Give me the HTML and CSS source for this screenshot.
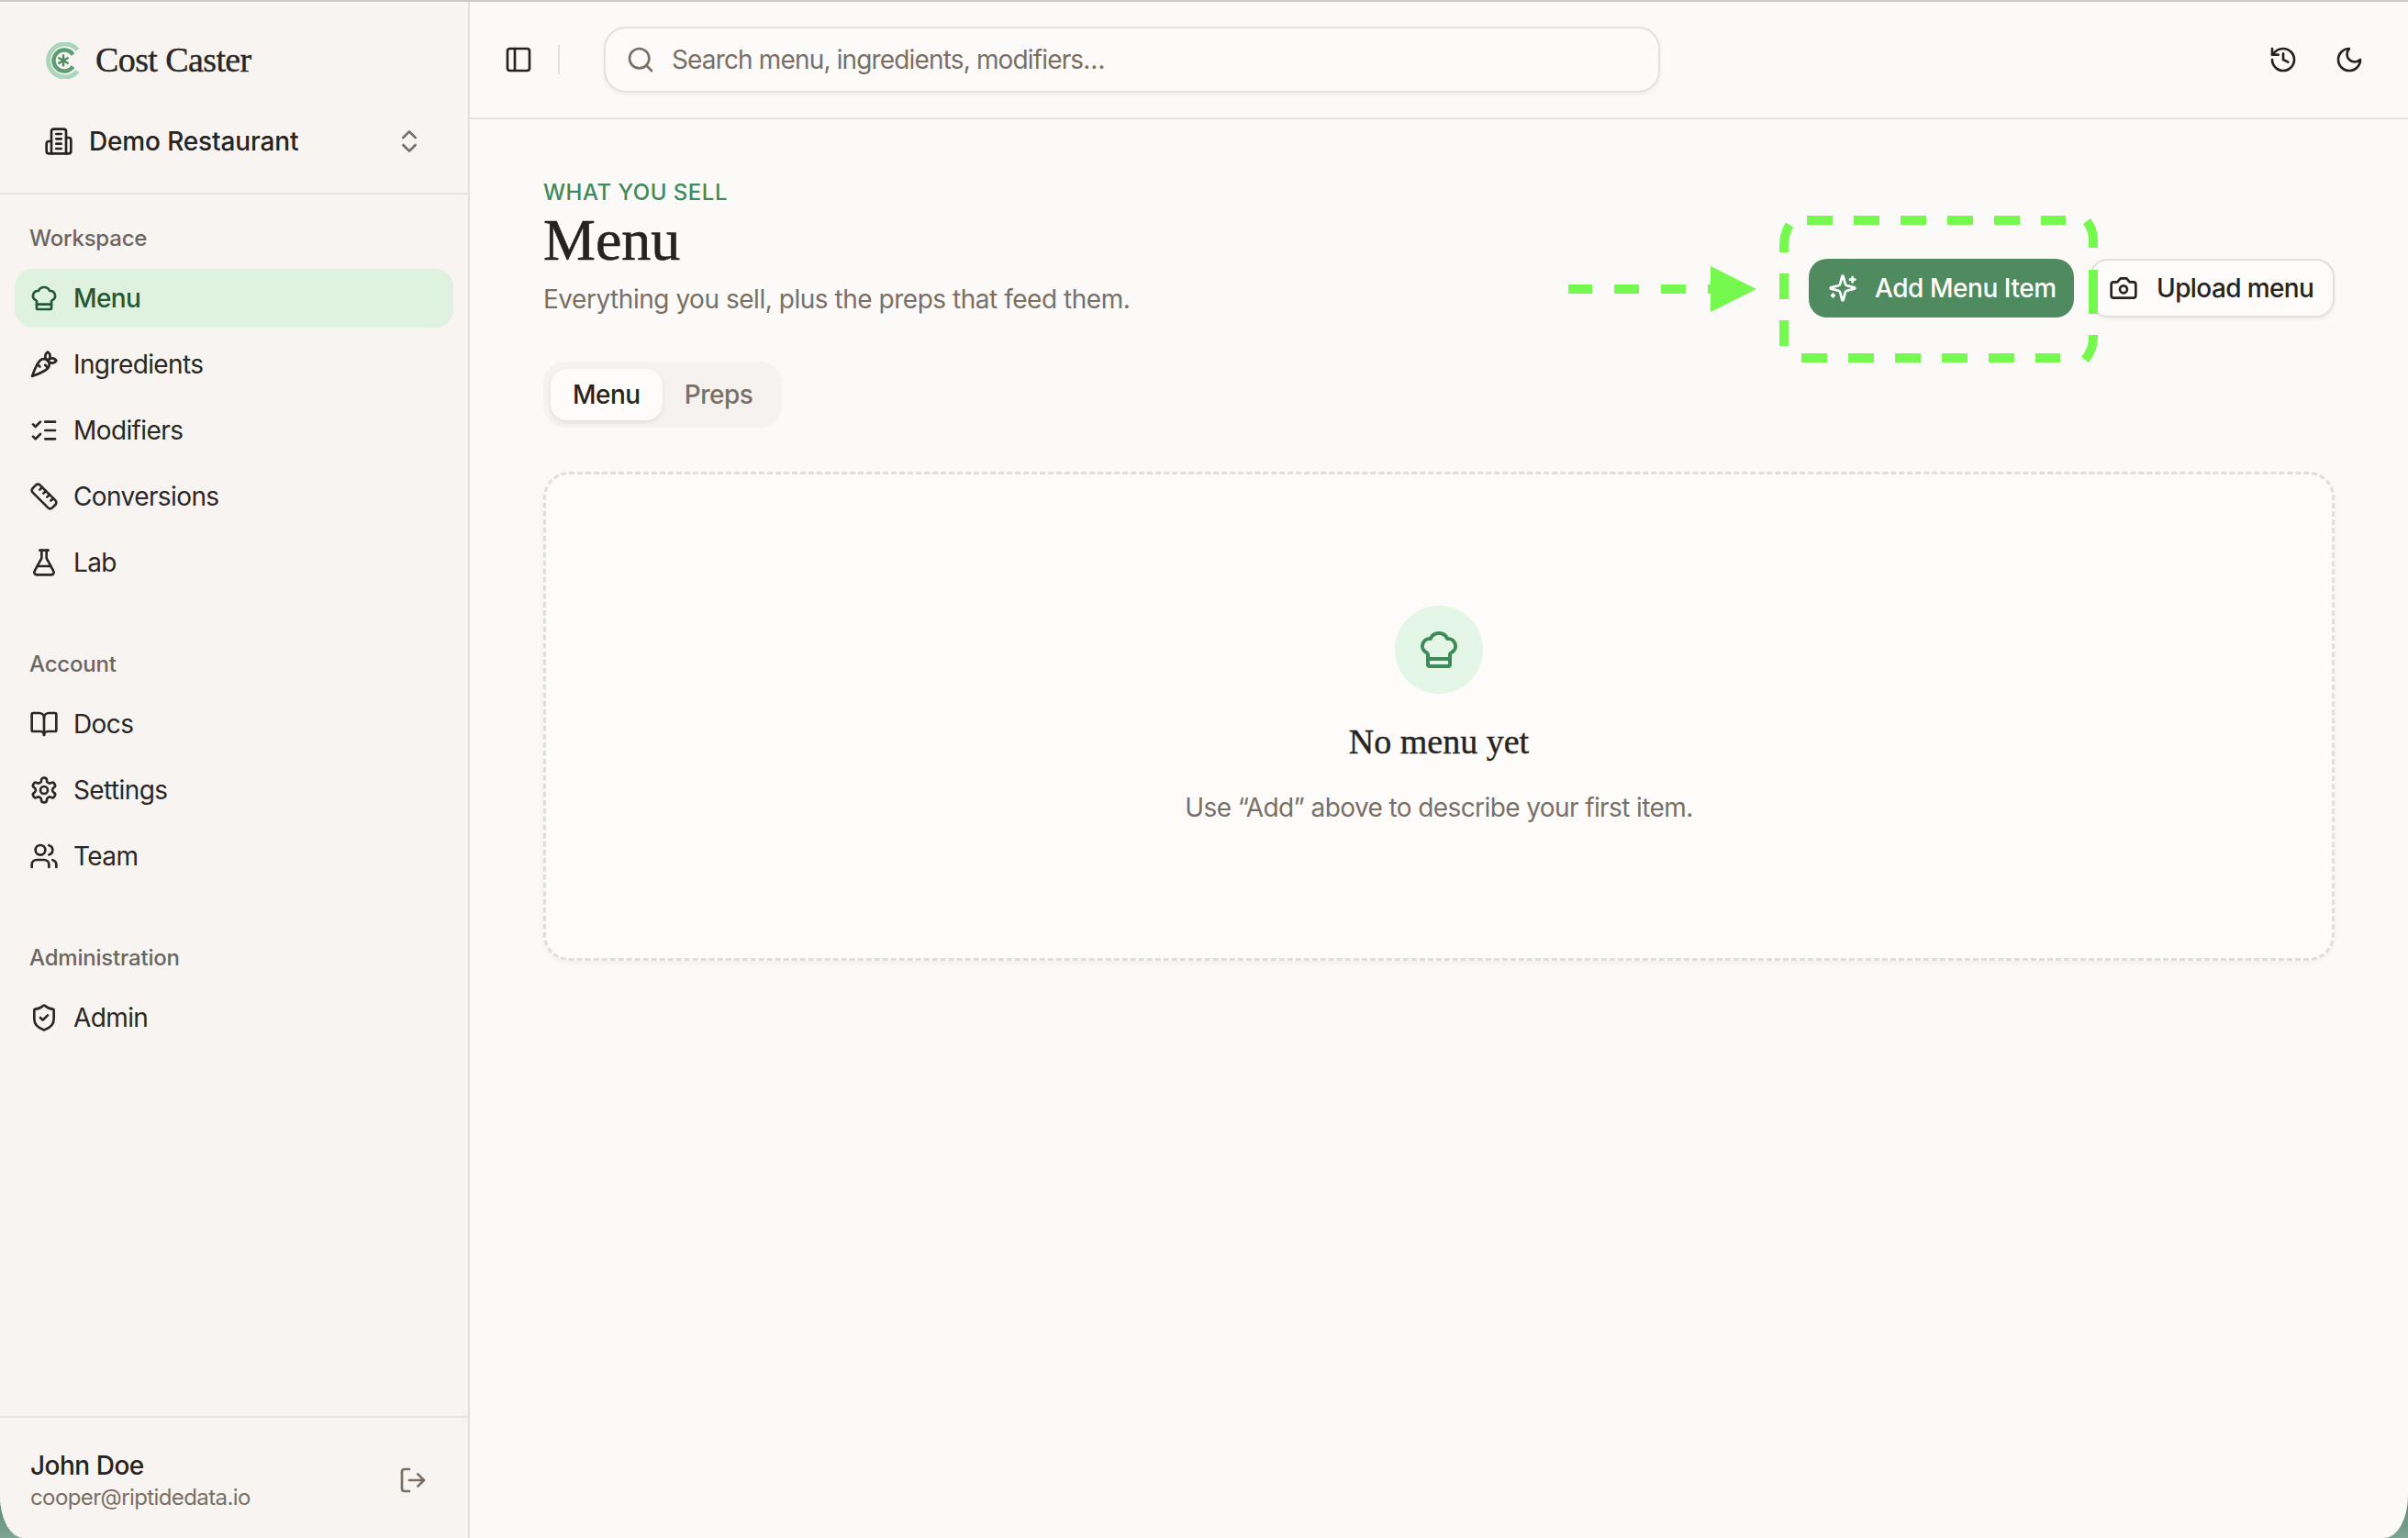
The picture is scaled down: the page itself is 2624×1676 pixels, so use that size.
FILE: index.html
```html
<!DOCTYPE html>
<html lang="en">
<head>
<meta charset="utf-8">
<title>Cost Caster</title>
<link rel="stylesheet" href="styles.css">
</head>
<body>
<div class="app">
  <aside class="sidebar">
    <div class="side-head">
      <div class="brand">
        <svg class="logo" viewBox="0 0 40 40" fill="none">
          <path d="M35.5 8.5A18 18 0 1 0 35.5 31.5" stroke="#abd6bb" stroke-width="5"/>
          <path d="M30.5 13.5A11.5 11.5 0 1 0 30.5 26.5" stroke="#5d9d74" stroke-width="4.5"/>
          <path d="M20 13.5v13M14.4 16.7l11.2 6.6M14.4 23.3l11.2-6.6" stroke="#4f8b5e" stroke-width="2.4"/>
        </svg>
        <span class="brand-name">Cost Caster</span>
      </div>
      <div class="org">
        <svg class="ico" viewBox="0 0 24 24"><path d="M6 22V4a2 2 0 0 1 2-2h8a2 2 0 0 1 2 2v18Z"/><path d="M6 12H4a2 2 0 0 0-2 2v6a2 2 0 0 0 2 2h2"/><path d="M18 9h2a2 2 0 0 1 2 2v9a2 2 0 0 1-2 2h-2"/><path d="M10 6h4"/><path d="M10 10h4"/><path d="M10 14h4"/><path d="M10 18h4"/></svg>
        <span class="org-name">Demo Restaurant</span>
        <svg class="ico ico-muted" viewBox="0 0 24 24"><path d="m7 15 5 5 5-5"/><path d="m7 9 5-5 5 5"/></svg>
      </div>
    </div>
    <nav class="nav">
      <div class="nav-group">
        <div class="nav-label">Workspace</div>
        <a class="nav-item is-active"><svg class="ico" viewBox="0 0 24 24"><path d="M17 21a1 1 0 0 0 1-1v-5.35c0-.457.316-.844.727-1.041a4 4 0 0 0-2.134-7.589 5 5 0 0 0-9.186 0 4 4 0 0 0-2.134 7.588c.411.198.727.585.727 1.041V20a1 1 0 0 0 1 1Z"/><path d="M6 17h12"/></svg>Menu</a>
        <a class="nav-item"><svg class="ico" viewBox="0 0 24 24"><path d="M2.27 21.7s9.87-3.5 12.73-6.36a4.5 4.5 0 0 0-6.36-6.37C5.77 11.84 2.27 21.7 2.27 21.7zM8.64 14l-2.05-2.04M15.34 15l-2.46-2.46"/><path d="M22 9s-1.33-2-3.5-2C16.86 7 15 9 15 9s1.33 2 3.5 2S22 9 22 9z"/><path d="M15 2s-2 1.33-2 3.5S15 9 15 9s2-1.84 2-3.5C17 3.33 15 2 15 2z"/></svg>Ingredients</a>
        <a class="nav-item"><svg class="ico" viewBox="0 0 24 24"><path d="M13 5h8"/><path d="M13 12h8"/><path d="M13 19h8"/><path d="m3 17 2 2 4-4"/><path d="m3 7 2 2 4-4"/></svg>Modifiers</a>
        <a class="nav-item"><svg class="ico" viewBox="0 0 24 24"><path d="M21.3 15.3a2.4 2.4 0 0 1 0 3.4l-2.6 2.6a2.4 2.4 0 0 1-3.4 0L2.7 8.7a2.41 2.41 0 0 1 0-3.4l2.6-2.6a2.41 2.41 0 0 1 3.4 0Z"/><path d="m14.5 12.5 2-2"/><path d="m11.5 9.5 2-2"/><path d="m8.5 6.5 2-2"/><path d="m17.5 15.5 2-2"/></svg>Conversions</a>
        <a class="nav-item"><svg class="ico" viewBox="0 0 24 24"><path d="M14 2v6a2 2 0 0 0 .245.96l5.51 10.08A2 2 0 0 1 18 22H6a2 2 0 0 1-1.755-2.96l5.51-10.08A2 2 0 0 0 10 8V2"/><path d="M6.453 15h11.094"/><path d="M8.5 2h7"/></svg>Lab</a>
      </div>
      <div class="nav-group">
        <div class="nav-label">Account</div>
        <a class="nav-item"><svg class="ico" viewBox="0 0 24 24"><path d="M12 7v14"/><path d="M3 18a1 1 0 0 1-1-1V4a1 1 0 0 1 1-1h5a4 4 0 0 1 4 4 4 4 0 0 1 4-4h5a1 1 0 0 1 1 1v13a1 1 0 0 1-1 1h-6a3 3 0 0 0-3 3 3 3 0 0 0-3-3z"/></svg>Docs</a>
        <a class="nav-item"><svg class="ico" viewBox="0 0 24 24"><path d="M12.22 2h-.44a2 2 0 0 0-2 2v.18a2 2 0 0 1-1 1.73l-.43.25a2 2 0 0 1-2 0l-.15-.08a2 2 0 0 0-2.73.73l-.22.38a2 2 0 0 0 .73 2.73l.15.1a2 2 0 0 1 1 1.72v.51a2 2 0 0 1-1 1.74l-.15.09a2 2 0 0 0-.73 2.73l.22.38a2 2 0 0 0 2.73.73l.15-.08a2 2 0 0 1 2 0l.43.25a2 2 0 0 1 1 1.73V20a2 2 0 0 0 2 2h.44a2 2 0 0 0 2-2v-.18a2 2 0 0 1 1-1.73l.43-.25a2 2 0 0 1 2 0l.15.08a2 2 0 0 0 2.73-.73l.22-.39a2 2 0 0 0-.73-2.73l-.15-.08a2 2 0 0 1-1-1.74v-.5a2 2 0 0 1 1-1.74l.15-.09a2 2 0 0 0 .73-2.73l-.22-.38a2 2 0 0 0-2.73-.73l-.15.08a2 2 0 0 1-2 0l-.43-.25a2 2 0 0 1-1-1.73V4a2 2 0 0 0-2-2z"/><circle cx="12" cy="12" r="3"/></svg>Settings</a>
        <a class="nav-item"><svg class="ico" viewBox="0 0 24 24"><path d="M16 21v-2a4 4 0 0 0-4-4H6a4 4 0 0 0-4 4v2"/><circle cx="9" cy="7" r="4"/><path d="M22 21v-2a4 4 0 0 0-3-3.87"/><path d="M16 3.13a4 4 0 0 1 0 7.75"/></svg>Team</a>
      </div>
      <div class="nav-group">
        <div class="nav-label">Administration</div>
        <a class="nav-item"><svg class="ico" viewBox="0 0 24 24"><path d="M20 13c0 5-3.5 7.5-7.66 8.95a1 1 0 0 1-.67-.01C7.5 20.5 4 18 4 13V6a1 1 0 0 1 1-1c2 0 4.5-1.2 6.24-2.72a1.17 1.17 0 0 1 1.52 0C14.51 3.81 17 5 19 5a1 1 0 0 1 1 1z"/><path d="m9 12 2 2 4-4"/></svg>Admin</a>
      </div>
    </nav>
    <div class="user">
      <div class="user-text">
        <div class="user-name">John Doe</div>
        <div class="user-mail">cooper@riptidedata.io</div>
      </div>
      <svg class="ico ico-muted" viewBox="0 0 24 24"><path d="m16 17 5-5-5-5"/><path d="M21 12H9"/><path d="M9 21H5a2 2 0 0 1-2-2V5a2 2 0 0 1 2-2h4"/></svg>
    </div>
  </aside>
  <div class="content">
    <header class="topbar">
      <svg class="ico" viewBox="0 0 24 24"><rect width="18" height="18" x="3" y="3" rx="2"/><path d="M9 3v18"/></svg>
      <span class="top-sep"></span>
      <div class="search">
        <svg class="ico ico-muted" viewBox="0 0 24 24"><path d="m21 21-4.34-4.34"/><circle cx="11" cy="11" r="8"/></svg>
        <span class="search-text">Search menu, ingredients, modifiers…</span>
      </div>
      <div class="top-actions">
        <svg class="ico" viewBox="0 0 24 24"><path d="M3 12a9 9 0 1 0 9-9 9.75 9.75 0 0 0-6.74 2.74L3 8"/><path d="M3 3v5h5"/><path d="M12 7v5l4 2"/></svg>
        <svg class="ico" viewBox="0 0 24 24"><path d="M12 3a6 6 0 0 0 9 9 9 9 0 1 1-9-9Z"/></svg>
      </div>
    </header>
    <main class="main">
      <div class="page-head">
        <div class="titles">
          <div class="eyebrow">WHAT YOU SELL</div>
          <h1 class="title">Menu</h1>
          <p class="subtitle">Everything you sell, plus the preps that feed them.</p>
        </div>
        <div class="actions">
          <button class="btn btn-primary"><svg class="ico" viewBox="0 0 24 24"><path d="M9.937 15.5A2 2 0 0 0 8.5 14.063l-6.135-1.582a.5.5 0 0 1 0-.962L8.5 9.936A2 2 0 0 0 9.937 8.5l1.582-6.135a.5.5 0 0 1 .963 0L14.063 8.5A2 2 0 0 0 15.5 9.937l6.135 1.581a.5.5 0 0 1 0 .964L15.5 14.063a2 2 0 0 0-1.437 1.437l-1.582 6.135a.5.5 0 0 1-.963 0z"/><path d="M20 3v4"/><path d="M22 5h-4"/><path d="M4 17v2"/><path d="M5 18H3"/></svg>Add Menu Item</button>
          <button class="btn btn-ghost"><svg class="ico" viewBox="0 0 24 24"><path d="M14.5 4h-5L7 7H4a2 2 0 0 0-2 2v9a2 2 0 0 0 2 2h16a2 2 0 0 0 2-2V9a2 2 0 0 0-2-2h-3l-2.5-3z"/><circle cx="12" cy="13" r="3"/></svg>Upload menu</button>
        </div>
      </div>
      <div class="tabs">
        <span class="tab is-on">Menu</span>
        <span class="tab">Preps</span>
      </div>
      <section class="empty">
        <div class="empty-badge"><svg class="ico" viewBox="0 0 24 24"><path d="M17 21a1 1 0 0 0 1-1v-5.35c0-.457.316-.844.727-1.041a4 4 0 0 0-2.134-7.589 5 5 0 0 0-9.186 0 4 4 0 0 0-2.134 7.588c.411.198.727.585.727 1.041V20a1 1 0 0 0 1 1Z"/><path d="M6 17h12"/></svg></div>
        <h2 class="empty-title">No menu yet</h2>
        <p class="empty-text">Use “Add” above to describe your first item.</p>
      </section>
    </main>
  </div>
  <svg class="annotation" viewBox="1700 230 600 170" fill="none">
    <path class="a-line" d="M1709 315H1735M1759 315H1786M1810 315H1837M1861 315H1866"/>
    <path class="a-fill" d="M1864 290L1914 315L1864 340Z"/>
    <path class="a-line" d="M1969 240H1997M2020 240H2048M2071 240H2099M2122 240H2150M2173 240H2201M2224 240H2251"/>
    <path class="a-line" d="M1963 390H1991M2014 390H2042M2065 390H2093M2116 390H2144M2167 390H2195M2218 390H2245"/>
    <path class="a-line" d="M1944 275V267Q1944 255 1950 245M1944 298V326M1944 349V377"/>
    <path class="a-line" d="M2281 270V262Q2281 250 2274 241M2281 294V342M2281 365V368Q2281 381 2272 392"/>
  </svg>
</div>
</body>
</html>
```
FILE: styles.css
```css
* { box-sizing: border-box; }
html, body { margin: 0; height: 100%; }
body {
  background: linear-gradient(180deg, #7fa090 0%, #4f7f6e 97%, #7fa595 100%);
  font-family: Inter, "Liberation Sans", sans-serif;
  color: #262320;
  overflow: hidden;
}
.app {
  position: relative;
  display: flex;
  width: 2624px;
  height: 1676px;
  border-top: 2px solid #cbcbc7;
  border-radius: 0 0 26px 26px / 0 0 46px 46px;
  overflow: hidden;
  background: #fbfaf8;
}
.ico {
  width: 32px;
  height: 32px;
  flex: none;
  fill: none;
  stroke: currentColor;
  stroke-width: 2;
  stroke-linecap: round;
  stroke-linejoin: round;
}
.ico-muted { color: #7a6f65; }

/* sidebar */
.sidebar {
  width: 512px;
  flex: none;
  display: flex;
  flex-direction: column;
  background: #f7f4f1;
  border-right: 2px solid #e3e0dc;
}
.side-head {
  height: 210px;
  padding: 0 48px;
  border-bottom: 2px solid #e8e5e1;
  flex: none;
}
.brand {
  display: flex;
  align-items: center;
  gap: 15px;
  height: 128px;
  padding-left: 1px;
}
.logo { width: 40px; height: 40px; flex: none; }
.brand-name {
  margin-bottom: 2px;
  font-family: "Liberation Serif", serif;
  font-size: 38px;
  letter-spacing: -0.6px;
  -webkit-text-stroke: 0.4px #2a2724;
  color: #2a2724;
}
.org {
  display: flex;
  align-items: center;
  height: 48px;
  gap: 17px;
}
.org-name {
  flex: 1;
  font-size: 28px;
  font-weight: 500;
  letter-spacing: -0.15px;
}
.nav {
  flex: 1;
  padding: 0 16px;
}
.nav-group { margin-bottom: 62px; }
.nav-group:first-child { padding-top: 31px; }
.nav-label {
  height: 34px;
  line-height: 34px;
  padding-left: 16px;
  font-size: 24px;
  font-weight: 500;
  letter-spacing: -0.2px;
  color: #6c6661;
  margin-bottom: 16px;
}
.nav-item {
  display: flex;
  align-items: center;
  gap: 16px;
  height: 64px;
  margin-bottom: 8px;
  padding-left: 16px;
  border-radius: 20px;
  font-size: 28px;
  letter-spacing: -0.6px;
  color: #2a2724;
}
.nav-item.is-active {
  background: #def2df;
  color: #23583a;
  font-weight: 500;
}
.user {
  height: 133px;
  flex: none;
  display: flex;
  align-items: center;
  justify-content: space-between;
  padding: 0 44px 0 33px;
  border-top: 2px solid #e8e5e1;
}
.user .ico { margin-top: 4px; }
.user-text { margin-top: 6px; }
.user-name {
  font-size: 28px;
  font-weight: 500;
  letter-spacing: -0.5px;
  line-height: 36px;
}
.user-mail {
  font-size: 24px;
  line-height: 34px;
  letter-spacing: -0.6px;
  color: #7a6f65;
}

/* content */
.content {
  flex: 1;
  display: flex;
  flex-direction: column;
  min-width: 0;
}
.topbar {
  height: 128px;
  flex: none;
  display: flex;
  align-items: center;
  padding: 0 48px 0 37px;
  border-bottom: 2px solid #e4e2de;
}
.top-sep {
  width: 2px;
  height: 32px;
  margin: 0 48px 0 27px;
  background: #e4e2de;
}
.search {
  width: 1151px;
  height: 72px;
  display: flex;
  align-items: center;
  gap: 18px;
  padding: 0 22px;
  border: 2px solid #e4e2de;
  border-radius: 24px;
  background: #fcfbf9;
  box-shadow: 0 2px 4px rgba(60, 50, 40, 0.06);
}
.search-text {
  font-size: 28px;
  letter-spacing: -0.85px;
  color: #7a6f65;
}
.top-actions {
  margin-left: auto;
  display: flex;
  gap: 40px;
}
.main {
  flex: 1;
  padding: 64px 80px 0;
}
.page-head {
  display: flex;
  justify-content: space-between;
  align-items: flex-end;
}
.eyebrow {
  height: 32px;
  line-height: 32px;
  font-size: 24px;
  font-weight: 500;
  letter-spacing: 0.5px;
  color: #3f8a5a;
}
.title {
  margin: 0;
  height: 72px;
  line-height: 72px;
  font-family: "Liberation Serif", serif;
  font-size: 64px;
  font-weight: 400;
  -webkit-text-stroke: 0.6px #262320;
  color: #262320;
}
.subtitle {
  margin: 8px 0 0;
  height: 40px;
  line-height: 40px;
  font-size: 28px;
  letter-spacing: -0.47px;
  color: #7a6f65;
}
.actions {
  display: flex;
  gap: 17px;
}
.btn {
  display: flex;
  align-items: center;
  height: 64px;
  border-radius: 20px;
  font-family: inherit;
  font-size: 28px;
  font-weight: 500;
  white-space: nowrap;
  border: 0;
}
.btn-primary {
  width: 289px;
  padding: 0 21px;
  gap: 19px;
  letter-spacing: -0.45px;
  background: #4f8b5e;
  color: #fff;
}
.btn-ghost {
  width: 267px;
  padding: 0 19px;
  gap: 20px;
  letter-spacing: -0.6px;
  background: #fdfcfb;
  color: #262320;
  border: 2px solid #e3e0dc;
  box-shadow: 0 2px 4px rgba(60, 50, 40, 0.06);
}
.tabs {
  display: inline-flex;
  align-items: center;
  height: 72px;
  margin-top: 48px;
  padding: 0 8px;
  border-radius: 24px;
  background: #f5f2ef;
}
.tab {
  height: 56px;
  line-height: 56px;
  padding: 0 24px;
  font-size: 28px;
  font-weight: 500;
  letter-spacing: -0.5px;
  border-radius: 18px;
  color: #7a6f65;
}
.tab.is-on {
  background: #fdfcfb;
  color: #262320;
  box-shadow: 0 2px 5px rgba(60, 50, 40, 0.1);
}
.empty {
  display: flex;
  flex-direction: column;
  align-items: center;
  height: 533px;
  margin-top: 48px;
  padding-top: 143px;
  border: 3px dashed #e2dfda;
  border-radius: 28px;
  background: #fdfcfb;
  box-shadow: 0 2px 4px rgba(60, 50, 40, 0.05);
}
.empty-badge {
  width: 96px;
  height: 96px;
  display: flex;
  align-items: center;
  justify-content: center;
  border-radius: 50%;
  background: #e4f6e6;
  color: #3f8a5a;
}
.empty-badge .ico { width: 48px; height: 48px; }
.empty-title {
  margin: 28px 0 0;
  height: 48px;
  line-height: 48px;
  font-family: "Liberation Serif", serif;
  font-size: 38px;
  font-weight: 400;
  -webkit-text-stroke: 0.4px #262320;
  color: #262320;
}
.empty-text {
  margin: 28px 0 0;
  height: 40px;
  line-height: 40px;
  font-size: 28px;
  letter-spacing: -0.6px;
  color: #7a6f65;
}

/* hand-drawn annotation over the page */
.annotation {
  position: absolute;
  left: 1700px;
  top: 228px;
  width: 600px;
  height: 170px;
  pointer-events: none;
}
.a-line { stroke: #76f94e; stroke-width: 10; }
.a-fill { fill: #76f94e; }
```
